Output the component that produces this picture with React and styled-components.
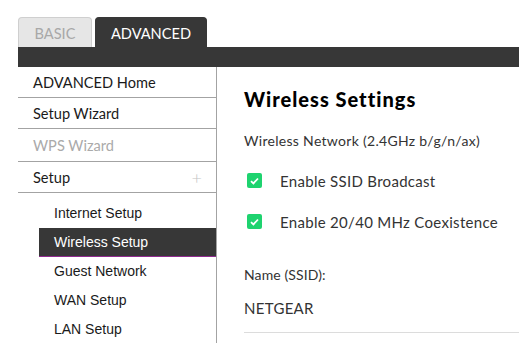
import React from 'react';
import styled, { createGlobalStyle } from 'styled-components';

const GlobalStyle = createGlobalStyle`
  body {
    margin: 0;
    background: #fff;
    font-family: Lato, "Open Sans", sans-serif;
  }
`;

const Page = styled.div`
  padding: 17px 0 0 18px;
  overflow: hidden;
  height: 326px;
`;

const TabRow = styled.div`
  display: flex;
  gap: 3px;
`;

const Tab = styled.div`
  box-sizing: border-box;
  width: ${(p) => p.width}px;
  height: 30px;
  display: flex;
  align-items: center;
  justify-content: center;
  font-size: 14.6px;
  border-radius: 4px 4px 0 0;
  background: ${(p) => (p.active ? '#373737' : '#e6e6e6')};
  color: ${(p) => (p.active ? '#fff' : '#a8a8a8')};
  border: 1px solid ${(p) => (p.active ? '#373737' : '#cfcfcf')};
  border-bottom: none;
  padding-top: 2px;
`;

const Bar = styled.div`
  height: 20px;
  background: #373737;
`;

const Body = styled.div`
  display: flex;
`;

const Sidebar = styled.nav`
  width: 198px;
  flex-shrink: 0;
  border-right: 1px solid #a3a3a3;
  min-height: 300px;
`;

const NavItem = styled.div`
  height: ${(p) => p.h || 30}px;
  display: flex;
  align-items: center;
  justify-content: space-between;
  padding: 0 14px 0 15px;
  border-bottom: 1px solid #a3a3a3;
  font-size: 14.6px;
  color: ${(p) => (p.disabled ? '#aaa' : '#1a1a1a')};
`;

const Plus = styled.span`
  font-size: 18px;
  font-weight: 300;
  color: #c4c4c4;
  line-height: 1;
`;

const SubList = styled.div`
  padding-top: 6px;
`;

const SubItem = styled.div`
  height: 28px;
  margin-left: 21px;
  padding-left: 15px;
  display: flex;
  align-items: center;
  font-family: "Liberation Sans", Arial, sans-serif;
  font-size: 14px;
  color: ${(p) => (p.active ? '#fff' : '#1a1a1a')};
  background: ${(p) => (p.active ? '#373737' : 'transparent')};
  border-bottom: 1px solid ${(p) => (p.active ? '#8e2a8e' : 'transparent')};
`;

const Main = styled.main`
  flex: 1;
  padding: 20px 0 0 27px;
  color: #333;
`;

const Heading = styled.h2`
  margin: 0 0 21px;
  font-size: 20px;
  font-weight: 900;
  letter-spacing: 1px;
  color: #000;
`;

const Label = styled.div`
  font-size: 14px;
  letter-spacing: ${(p) => (p.wide ? 0.3 : 0.1)}px;
  margin: ${(p) => p.top || 0}px 0 ${(p) => p.bottom || 0}px;
`;

const CheckRow = styled.label`
  display: flex;
  align-items: center;
  height: 41px;
  font-size: 15px;
  letter-spacing: 0.3px;
`;

const Box = styled.span`
  width: 15px;
  height: 15px;
  margin: 0 18px 0 3px;
  border-radius: 2px;
  background: #1ed36f;
  display: flex;
  align-items: center;
  justify-content: center;
`;

const Field = styled.div`
  font-size: 15px;
  letter-spacing: 0.3px;
  padding: 16px 0 15px;
  border-bottom: 1px solid #dcdcdc;
`;

const Check = ({ children }) => (
  <CheckRow>
    <Box>
      <svg width="9" height="8" viewBox="0 0 9 8">
        <path d="M1 4.2 L3.4 6.4 L8 1.5" fill="none" stroke="#fff" strokeWidth="1.8" />
      </svg>
    </Box>
    {children}
  </CheckRow>
);

export default function App() {
  return (
    <>
      <GlobalStyle />
      <Page>
        <TabRow>
          <Tab width={74}>BASIC</Tab>
          <Tab width={112} active>ADVANCED</Tab>
        </TabRow>
        <Bar />
        <Body>
          <Sidebar>
            <NavItem>ADVANCED Home</NavItem>
            <NavItem>Setup Wizard</NavItem>
            <NavItem disabled h={32}>WPS Wizard</NavItem>
            <NavItem>
              Setup <Plus>+</Plus>
            </NavItem>
            <SubList>
              <SubItem>Internet Setup</SubItem>
              <SubItem active>Wireless Setup</SubItem>
              <SubItem>Guest Network</SubItem>
              <SubItem>WAN Setup</SubItem>
              <SubItem>LAN Setup</SubItem>
            </SubList>
          </Sidebar>
          <Main>
            <Heading>Wireless Settings</Heading>
            <Label wide bottom={11}>Wireless Network (2.4GHz b/g/n/ax)</Label>
            <Check>Enable SSID Broadcast</Check>
            <Check>Enable 20/40 MHz Coexistence</Check>
            <Label top={24}>Name (SSID):</Label>
            <Field>NETGEAR</Field>
          </Main>
        </Body>
      </Page>
    </>
  );
}
